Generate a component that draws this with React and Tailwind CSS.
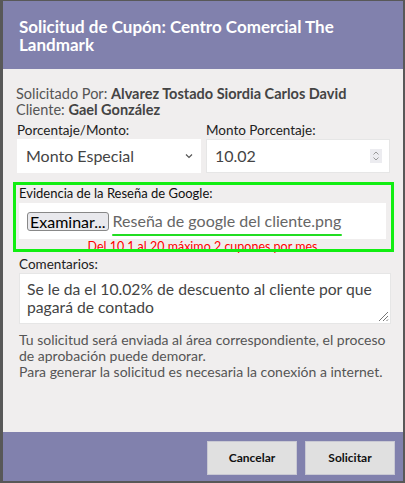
export default function App() {
  return (
    <div className="h-[483px] w-[405px] bg-[#585858] pt-px pl-[3px] font-['Lato','Noto_Sans',sans-serif]">
      <div className="relative flex h-[480px] w-[400px] flex-col bg-[#f0eeee]">
        <div className="h-[68px] bg-[#8181ad] px-4 pt-[17px]">
          <h1 className="text-[17px] font-bold leading-[18px] text-white">
            Solicitud de Cupón: Centro Comercial The Landmark
          </h1>
        </div>

        <div className="flex-1 px-[13px] pt-[17px]">
          <p className="text-[14.5px] leading-4 text-[#555]">
            Solicitado Por: <b className="text-[#444]">Alvarez Tostado Siordia Carlos David</b>
          </p>
          <p className="text-[14.5px] leading-4 text-[#555]">
            Cliente: <b className="text-[#444]">Gael González</b>
          </p>

          <div className="mt-[3px] grid grid-cols-2 gap-[5px] pl-px">
            <div>
              <label className="block text-[13.5px] leading-[18px] text-[#222]">Porcentaje/Monto:</label>
              <div className="flex h-[34px] items-center justify-between bg-white pl-[9px] pr-[8px]">
                <span className="text-[16px] text-[#444]">Monto Especial</span>
                <svg width="8" height="6" viewBox="0 0 8 6" className="text-[#555]">
                  <path d="M1 1.5 L4 4.5 L7 1.5" fill="none" stroke="currentColor" strokeWidth="1.2" />
                </svg>
              </div>
            </div>
            <div>
              <label className="block text-[13.5px] leading-[18px] text-[#222]">Monto Porcentaje:</label>
              <div className="flex h-[34px] items-center justify-between border border-[#e6e6e6] bg-white pl-[8px] pr-[7px]">
                <span className="text-[16px] text-[#444]">10.02</span>
                <div className="flex h-[14px] w-[12px] flex-col items-center justify-center bg-[#ececf0]">
                  <svg width="8" height="12" viewBox="0 0 8 12" className="text-[#999]">
                    <path d="M1.5 4.5 L4 2 L6.5 4.5 M1.5 7.5 L4 10 L6.5 7.5" fill="none" stroke="currentColor" strokeWidth="1" />
                  </svg>
                </div>
              </div>
            </div>
          </div>

          <div className="mt-[12px] pl-[3px] pr-[4px]">
            <label className="block text-[13px] leading-[16px] text-[#111]">Evidencia de la Reseña de Google:</label>
            <div className="mt-[2px] flex h-[36px] items-center bg-white pl-[8px]">
              <span className="rounded-[3px] border border-[#888] bg-[#e9e9ed] px-[2px] text-[16px] leading-[17px] text-black">
                Examinar...
              </span>
              <span className="relative ml-[4px] text-[16px] text-[#666]">
                Reseña de google del cliente.png
                <span className="absolute -bottom-[3px] -left-[1px] h-[2px] w-[230px] rounded-full bg-[#22dd22]"></span>
              </span>
            </div>
            <p className="mt-px text-center text-[12.5px] leading-[14px] text-[#ff0000]">
              Del 10.1 al 20 máximo 2 cupones por mes
            </p>
          </div>

          <div className="mt-[1px] pl-[3px]">
            <label className="block text-[13.5px] leading-[18px] text-[#222]">Comentarios:</label>
            <div className="relative h-[51px] w-[372px] border border-[#e6e6e6] bg-white px-[7px] pt-[6px]">
              <p className="text-[15.7px] leading-[18px] text-[#444]">
                Se le da el 10.02% de descuento al cliente por que pagará de contado
              </p>
              <svg width="12" height="12" viewBox="0 0 12 12" className="absolute bottom-[1px] right-[1px] text-[#777]">
                <path d="M11 2 L2 11 M11 6 L6 11 M11 9.5 L9.5 11" stroke="currentColor" strokeWidth="1" />
              </svg>
            </div>
          </div>

          <p className="mt-[8px] pl-[3px] text-[14px] leading-[16px] text-[#555]">
            Tu solicitud será enviada al área correspondiente, el proceso de aprobación puede demorar.
            <br />
            Para generar la solicitud es necesaria la conexión a internet.
          </p>
        </div>

        <div className="flex h-[49px] items-start justify-end gap-[8px] bg-[#8181ad] pr-[8px] pt-[9px]">
          <button className="h-[34px] w-[90px] border border-[#c9c9d3] bg-[#e0e0e0] text-[12px] font-bold text-[#111]">
            Cancelar
          </button>
          <button className="h-[34px] w-[90px] border border-[#c9c9d3] bg-[#e0e0e0] text-[12px] font-bold text-[#111]">
            Solicitar
          </button>
        </div>

        <div className="pointer-events-none absolute left-[10px] top-[181px] h-[70px] w-[381px] border-[3px] border-[#11ee11]"></div>
      </div>
    </div>
  );
}
